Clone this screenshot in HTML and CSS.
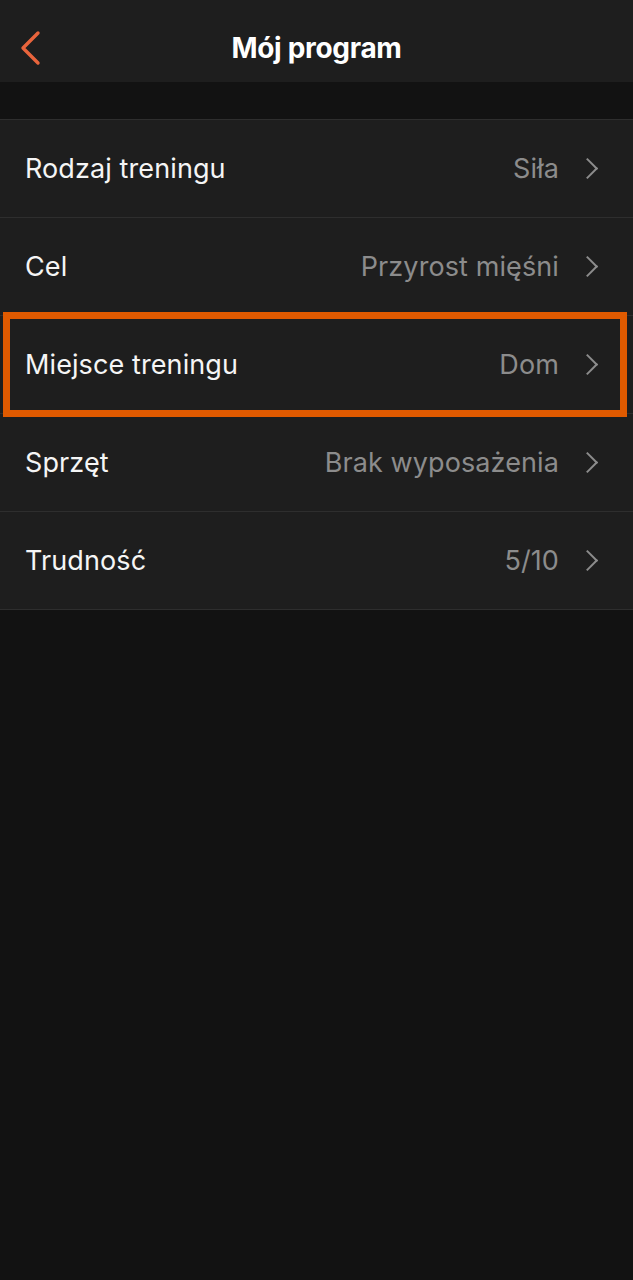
FILE: index.html
```html
<!DOCTYPE html>
<html lang="pl">
<head>
    <meta charset="UTF-8">
    <meta name="viewport" content="width=device-width, initial-scale=1.0">
    <title>Mój program</title>
    <link rel="stylesheet" href="styles.css">
</head>
<body>
    <div class="header">
        <a class="back" href="#">
            <svg width="26" height="36" viewBox="0 0 26 36"><path d="M21 3 L6 18 L21 33" fill="none" stroke="#e8643c" stroke-width="3.4" stroke-linecap="round" stroke-linejoin="round"/></svg>
        </a>
        <h1>Mój program</h1>
    </div>

    <ul class="settings">
        <li class="row"><span class="label">Rodzaj treningu</span><span class="value">Siła</span><span class="chev"></span></li>
        <li class="row"><span class="label">Cel</span><span class="value">Przyrost mięśni</span><span class="chev"></span></li>
        <li class="row active"><span class="label">Miejsce treningu</span><span class="value">Dom</span><span class="chev"></span></li>
        <li class="row"><span class="label">Sprzęt</span><span class="value">Brak wyposażenia</span><span class="chev"></span></li>
        <li class="row"><span class="label">Trudność</span><span class="value">5/10</span><span class="chev"></span></li>
    </ul>
</body>
</html>
```

FILE: styles.css
```css
body {
    margin: 0;
    background: #121212;
    font-family: 'Inter', 'Noto Sans', sans-serif;
    color: #fff;
    min-height: 1280px;
}

.header {
    height: 68px;
    padding-top: 14px;
    background: #1e1e1e;
    display: flex;
    align-items: center;
    justify-content: center;
    position: relative;
}

.header h1 {
    margin: 0;
    font-size: 28px;
    font-weight: 700;
    letter-spacing: -0.3px;
}

.back {
    position: absolute;
    left: 17px;
    top: 30px;
    display: block;
    height: 36px;
}

.settings {
    list-style: none;
    margin: 37px 0 0 0;
    padding: 0;
    background: #1e1e1e;
    border-top: 1px solid #2e2e2e;
}

.row {
    height: 97px;
    border-bottom: 1px solid #2e2e2e;
    display: flex;
    align-items: center;
    padding: 0 38px 0 25px;
    position: relative;
}

.label {
    flex-grow: 1;
    font-size: 27px;
    letter-spacing: 0.1px;
    color: #f5f5f5;
}

.value {
    font-size: 27px;
    letter-spacing: 0.1px;
    color: #8c8c8c;
    margin-right: 21px;
}

.chev {
    width: 13px;
    height: 13px;
    border-right: 2.6px solid #8c8c8c;
    border-top: 2.6px solid #8c8c8c;
    transform: rotate(45deg);
}

.active::after {
    content: "";
    position: absolute;
    left: 3px;
    right: 6px;
    top: -4px;
    bottom: -4px;
    border: 7px solid #e05a00;
}
```
